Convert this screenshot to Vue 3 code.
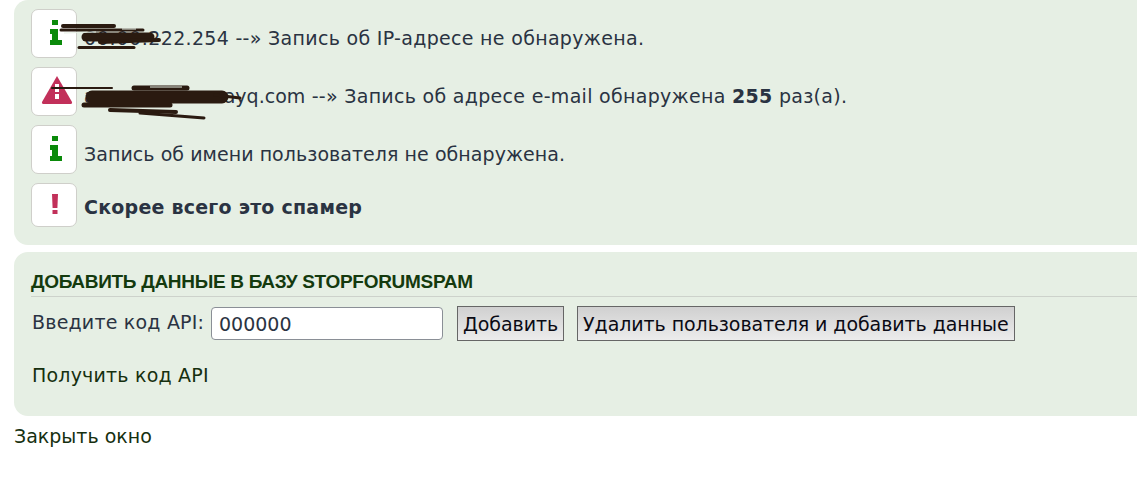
<script setup>
</script>

<template>
  <div class="page">
    <section class="panel results">
      <div class="row">
        <span class="icon">
          <svg width="46" height="48" viewBox="0 0 46 48"><path class="info" d="M21 11h6v5h-6zM19 20h8v11h4v5H19v-5h2v-6h-2z"/></svg>
        </span>
        <span class="msg wide"><span class="hidden-part">00.00.</span>222.254 --» Запись об IP-адресе не обнаружена.</span>
      </div>
      <div class="row">
        <span class="icon">
          <svg width="46" height="48" viewBox="0 0 46 48"><path class="danger" d="M26 9L41 35a1.500 1.500 0 0 1-1 2H12a1.500 1.500 0 0 1-1-2Z"/><path fill="#fff" d="M24 17h4v8h-4zM24 27h4v5h-4z"/></svg>
        </span>
        <span class="msg email"><span class="mail">aaaaaaaaaaaaayq.com</span> --» Запись об адресе e-mail обнаружена <b>255</b> раз(а).</span>
      </div>
      <div class="row">
        <span class="icon">
          <svg width="46" height="48" viewBox="0 0 46 48"><path class="info" d="M21 11h6v5h-6zM19 20h8v11h4v5H19v-5h2v-6h-2z"/></svg>
        </span>
        <span class="msg narrow">Запись об имени пользователя не обнаружена.</span>
      </div>
      <div class="row last">
        <span class="icon short">
          <svg width="46" height="44" viewBox="0 0 46 44"><path class="danger" d="M21 11h6l-.6 14h-4.800zM21.500 27h5v4h-5z"/></svg>
        </span>
        <b class="msg mid">Скорее всего это спамер</b>
      </div>
      <svg class="scribble" width="260" height="125" viewBox="0 0 260 125" aria-hidden="true">
        <g fill="none" stroke="#2a1a10" stroke-linecap="round">
          <path stroke-width="4" d="M63 26H114"/>
          <path stroke-width="3" d="M61 30H143"/>
          <path stroke-width="9" d="M86 37H150"/>
          <path stroke-width="4" d="M100 42L159 40"/>
          <path stroke-width="3" d="M79 47.500H134"/>
          <path stroke-width="2" d="M52 88H112"/>
          <path stroke-width="5" d="M134 88H187"/>
          <path stroke-width="13" d="M92 97H222"/>
          <path stroke-width="3" d="M215 95L240 98"/>
          <path stroke-width="5" d="M84 105H170"/>
          <path stroke-width="4" d="M110 110L176 112"/>
          <path stroke-width="3" d="M140 113L204 118"/>
        </g>
        <path d="M64 33L96 32M122 29H136M150 87H182" stroke="#e6efe4" stroke-width="1" fill="none"/>
      </svg>
    </section>

    <section class="panel add">
      <h3>ДОБАВИТЬ ДАННЫЕ В БАЗУ STOPFORUMSPAM</h3>
      <form class="form" @submit.prevent>
        <label for="api">Введите код API:</label>
        <input id="api" value="000000" />
        <button class="first" type="button">Добавить</button>
        <button type="button">Удалить пользователя и добавить данные</button>
      </form>
      <a class="link api">Получить код API</a>
    </section>

    <a class="link close">Закрыть окно</a>
  </div>
</template>

<style>
body { margin: 0; background: #fff; }
</style>

<style scoped>
.page {
  position: relative;
  width: 1137px;
  height: 498px;
  overflow: hidden;
  font-family: "DejaVu Sans", Verdana, sans-serif;
  font-size: 19px;
  color: #2a3342;
}
.panel {
  margin-left: 14px;
  background: #e6efe4;
  border-radius: 14px 0 0 14px;
  box-sizing: border-box;
}
.results {
  height: 245px;
  padding: 9px 0 0 17px;
  display: flex;
  flex-direction: column;
  gap: 9px;
}
.row {
  display: flex;
  align-items: flex-end;
  height: 49px;
  gap: 7px;
}
.row.last { height: 44px; }
.icon {
  flex: none;
  box-sizing: border-box;
  width: 46px;
  height: 49px;
  background: #fff;
  border: 1px solid #cfcfca;
  border-radius: 7px;
}
.icon svg { display: block; margin: -1px; }
.icon.short { height: 44px; }
.info { fill: #0a8a0a; }
.danger { fill: #c2305a; }
.msg {
  line-height: 21px;
  margin-bottom: 9px;
}
.wide { letter-spacing: 0.31px; }
.hidden-part { letter-spacing: 0.65px; }
.email { letter-spacing: 0.3px; }
.mail { letter-spacing: 0; }
.mid { letter-spacing: 0.23px; }
.narrow { letter-spacing: 0.05px; }
b.msg { font-weight: 700; }
.scribble {
  position: absolute;
  left: 0;
  top: 0;
  pointer-events: none;
}
.add {
  height: 164px;
  margin-top: 7px;
  padding: 18px 0 0 17px;
}
h3 {
  margin: 0;
  font: 700 19px/24px "Liberation Sans", Arial, sans-serif;
  letter-spacing: -0.3px;
  color: #143a0e;
  border-bottom: 1px solid #cdd2cb;
  height: 26px;
}
.form {
  display: flex;
  align-items: center;
  margin-top: 9px;
  height: 35px;
}
label {
  width: 179px;
  padding-left: 1px;
  flex: none;
  position: relative;
  top: -2px;
  letter-spacing: 0.2px;
}
input {
  box-sizing: border-box;
  width: 232px;
  height: 33px;
  padding: 0 7px;
  border: 1px solid #8a8f96;
  border-radius: 4px;
  background: #fff;
  color: #2a3342;
  font: 19px "DejaVu Sans", Verdana, sans-serif;
  outline: none;
}
button {
  box-sizing: border-box;
  height: 35px;
  padding: 0 5px;
  margin-left: 13px;
  border: 1px solid #666;
  border-radius: 0;
  background: linear-gradient(#d0d0d0, #ececec);
  color: #0a0a14;
  font: 19px "DejaVu Sans", Verdana, sans-serif;
  letter-spacing: -0.07px;
}
button.first { margin-left: 14px; }
.link {
  display: block;
  color: #16300f;
  line-height: 21px;
}
.add .api {
  margin-top: 24px;
  padding-left: 1px;
  letter-spacing: 0.2px;
}
.close { margin: 10px 0 0 14px; }
</style>
